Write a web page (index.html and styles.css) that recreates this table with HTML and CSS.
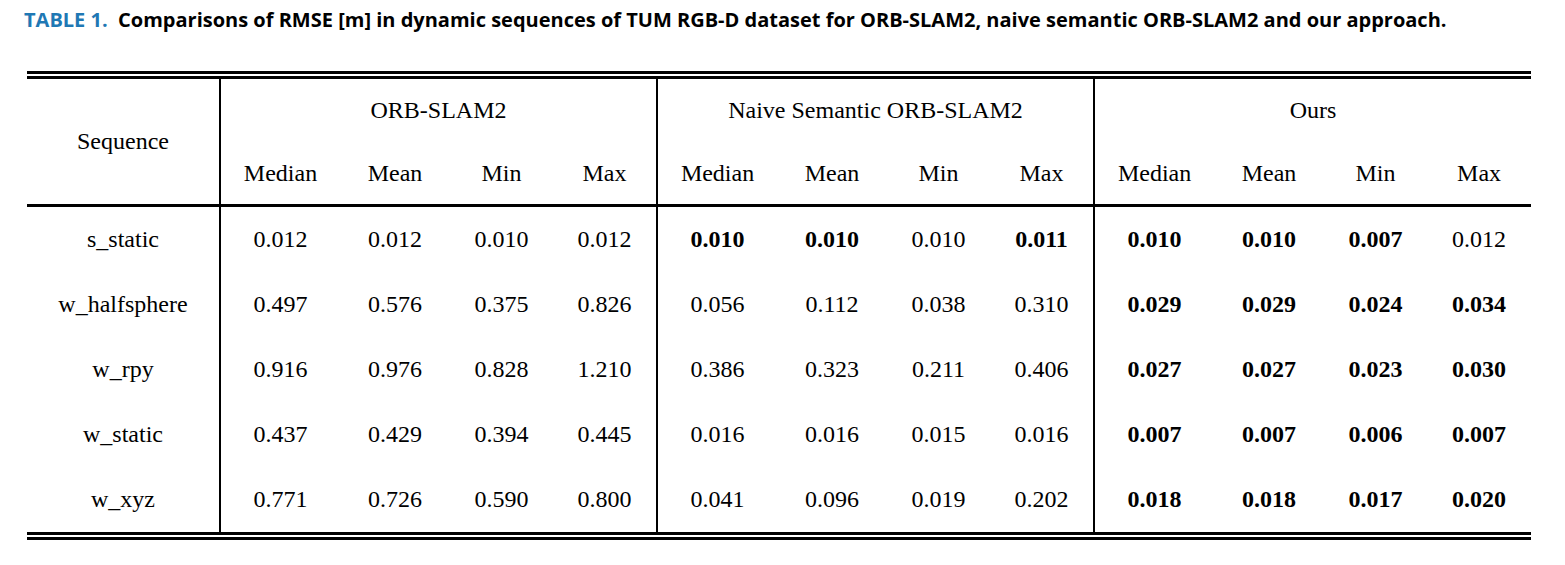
FILE: index.html
```html
<!DOCTYPE html>
<html>
<head>
<meta charset="utf-8">
<link rel="stylesheet" href="styles.css">
</head>
<body>
<div class="page">
  <p class="caption"><span class="label">TABLE 1.</span>&nbsp; Comparisons of RMSE [m] in dynamic sequences of TUM RGB-D dataset for ORB-SLAM2, naive semantic ORB-SLAM2 and our approach.</p>
  <div class="rules">
    <table class="results">
      <colgroup>
        <col class="c-seq">
        <col class="c-med"><col class="c-mean"><col class="c-min"><col class="c-max">
        <col class="c-med"><col class="c-mean"><col class="c-min"><col class="c-max">
        <col class="c-med"><col class="c-mean"><col class="c-min"><col class="c-max">
      </colgroup>
      <thead>
        <tr class="h1">
          <th rowspan="2" class="seq">Sequence</th>
          <th colspan="4" class="grp">ORB-SLAM2</th>
          <th colspan="4" class="grp">Naive Semantic ORB-SLAM2</th>
          <th colspan="4" class="grp">Ours</th>
        </tr>
        <tr class="h2">
          <th class="first">Median</th><th>Mean</th><th>Min</th><th>Max</th>
          <th class="first">Median</th><th>Mean</th><th>Min</th><th>Max</th>
          <th class="first">Median</th><th>Mean</th><th>Min</th><th>Max</th>
        </tr>
      </thead>
      <tbody>
        <tr>
          <td class="seq">s_static</td>
          <td class="first">0.012</td><td>0.012</td><td>0.010</td><td>0.012</td>
          <td class="first b">0.010</td><td class="b">0.010</td><td>0.010</td><td class="b">0.011</td>
          <td class="first b">0.010</td><td class="b">0.010</td><td class="b">0.007</td><td>0.012</td>
        </tr>
        <tr>
          <td class="seq">w_halfsphere</td>
          <td class="first">0.497</td><td>0.576</td><td>0.375</td><td>0.826</td>
          <td class="first">0.056</td><td>0.112</td><td>0.038</td><td>0.310</td>
          <td class="first b">0.029</td><td class="b">0.029</td><td class="b">0.024</td><td class="b">0.034</td>
        </tr>
        <tr>
          <td class="seq">w_rpy</td>
          <td class="first">0.916</td><td>0.976</td><td>0.828</td><td>1.210</td>
          <td class="first">0.386</td><td>0.323</td><td>0.211</td><td>0.406</td>
          <td class="first b">0.027</td><td class="b">0.027</td><td class="b">0.023</td><td class="b">0.030</td>
        </tr>
        <tr>
          <td class="seq">w_static</td>
          <td class="first">0.437</td><td>0.429</td><td>0.394</td><td>0.445</td>
          <td class="first">0.016</td><td>0.016</td><td>0.015</td><td>0.016</td>
          <td class="first b">0.007</td><td class="b">0.007</td><td class="b">0.006</td><td class="b">0.007</td>
        </tr>
        <tr>
          <td class="seq">w_xyz</td>
          <td class="first">0.771</td><td>0.726</td><td>0.590</td><td>0.800</td>
          <td class="first">0.041</td><td>0.096</td><td>0.019</td><td>0.202</td>
          <td class="first b">0.018</td><td class="b">0.018</td><td class="b">0.017</td><td class="b">0.020</td>
        </tr>
      </tbody>
    </table>
  </div>
</div>
</body>
</html>
```

FILE: styles.css
```css
html, body {
  margin: 0;
  padding: 0;
  background: #ffffff;
}

.page {
  padding: 8px 0 0 24px;
  width: 1507px;
}

.caption {
  margin: 0;
  height: 63px;
  font-family: "Open Sans", "Liberation Sans", sans-serif;
  font-weight: 700;
  font-stretch: 88%;
  font-size: 20px;
  line-height: 24px;
  color: #000;
  white-space: nowrap;
}

.caption .label {
  color: #1f78b4;
}

.rules {
  margin-left: 3px;
  width: 1504px;
  border-top: 3px solid #000;
  border-bottom: 3px solid #000;
  padding: 2px 0;
}

.results {
  width: 1504px;
  border-collapse: collapse;
  table-layout: fixed;
  border-top: 3px solid #000;
  border-bottom: 3px solid #000;
  font-family: "Liberation Serif", "Times New Roman", serif;
  font-size: 24px;
  color: #000;
}

.c-seq { width: 193px; }
.c-med { width: 120px; }
.c-mean { width: 110px; }
.c-min { width: 103px; }
.c-max { width: 104px; }

.results th,
.results td {
  padding: 0;
  text-align: center;
  font-weight: 400;
}

.results .h1 th { height: 63px; }
.results .h2 th { height: 62px; }

.results thead {
  border-bottom: 3px solid #000;
}

.results tbody td { height: 65px; }

.results .seq {
  border-right: 2px solid #000;
}

.results .grp {
  border-right: 2px solid #000;
}

.results .grp:last-child { border-right: none; }

.results .first {
  border-left: 2px solid #000;
}

.results td.b {
  font-weight: 700;
}
```
